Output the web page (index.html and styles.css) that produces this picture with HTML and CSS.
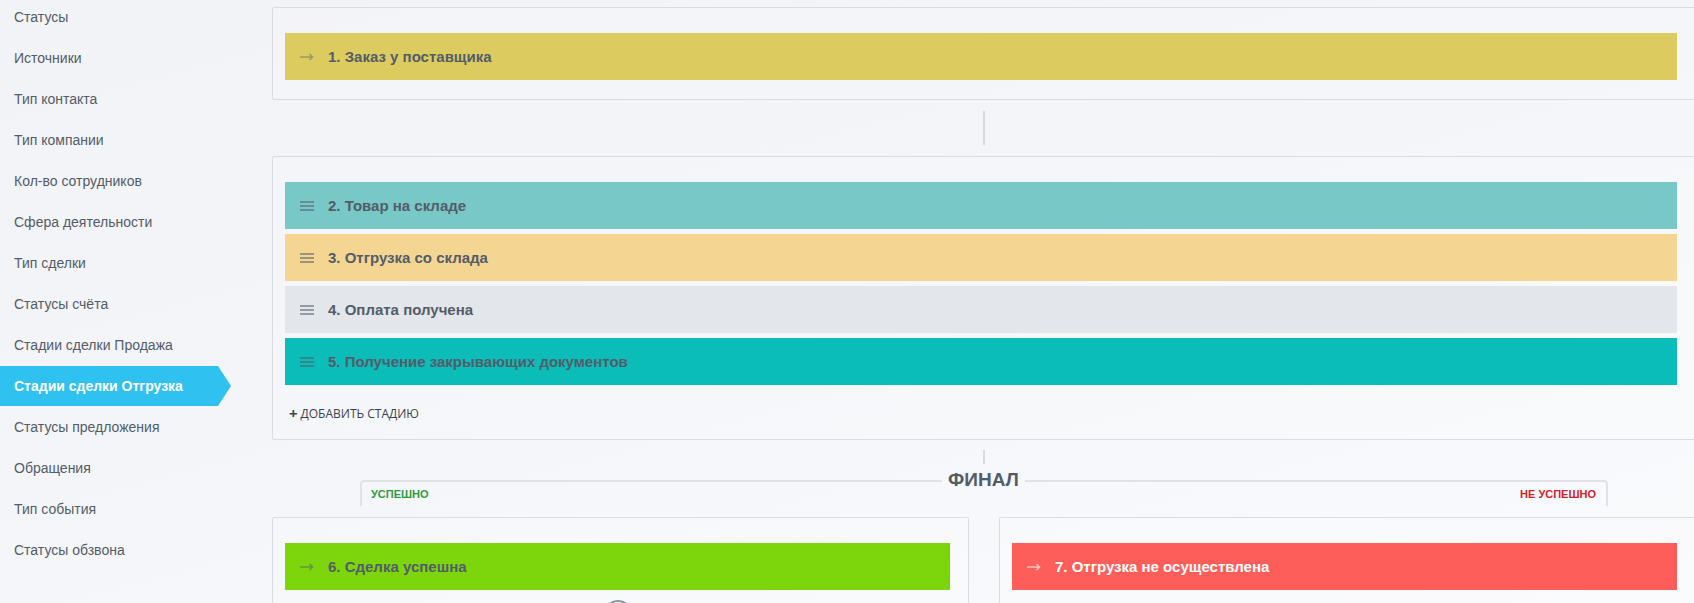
FILE: index.html
```html
<!DOCTYPE html>
<html lang="ru">
<head>
  <meta charset="UTF-8">
  <title>Стадии сделки Отгрузка</title>
  <link rel="stylesheet" href="styles.css">
</head>
<body>

  <div class="sidebar">
    <a class="nav-item">Статусы</a>
    <a class="nav-item">Источники</a>
    <a class="nav-item">Тип контакта</a>
    <a class="nav-item">Тип компании</a>
    <a class="nav-item">Кол-во сотрудников</a>
    <a class="nav-item">Сфера деятельности</a>
    <a class="nav-item">Тип сделки</a>
    <a class="nav-item">Статусы счёта</a>
    <a class="nav-item">Стадии сделки Продажа</a>
    <a class="nav-item active">Стадии сделки Отгрузка</a>
    <a class="nav-item">Статусы предложения</a>
    <a class="nav-item">Обращения</a>
    <a class="nav-item">Тип события</a>
    <a class="nav-item">Статусы обзвона</a>
  </div>

  <div class="main">
    <div class="card">
      <div class="stage stage-yellow">
        <svg class="stage-icon" width="14" height="8" viewBox="0 0 14 8"><path d="M0 4h12.5M9.5 1l3 3-3 3" fill="none" stroke="currentColor" stroke-width="1.6"/></svg>
        <span>1. Заказ у поставщика</span>
      </div>
    </div>

    <div class="connector"><div class="connector-line"></div></div>

    <div class="card">
      <div class="stage stage-teal">
        <svg class="stage-icon" width="14" height="10" viewBox="0 0 14 10"><rect y="0" width="14" height="2"/><rect y="4" width="14" height="2"/><rect y="8" width="14" height="2"/></svg>
        <span>2. Товар на складе</span>
      </div>
      <div class="stage stage-orange">
        <svg class="stage-icon" width="14" height="10" viewBox="0 0 14 10"><rect y="0" width="14" height="2"/><rect y="4" width="14" height="2"/><rect y="8" width="14" height="2"/></svg>
        <span>3. Отгрузка со склада</span>
      </div>
      <div class="stage stage-grey">
        <svg class="stage-icon" width="14" height="10" viewBox="0 0 14 10"><rect y="0" width="14" height="2"/><rect y="4" width="14" height="2"/><rect y="8" width="14" height="2"/></svg>
        <span>4. Оплата получена</span>
      </div>
      <div class="stage stage-sea">
        <svg class="stage-icon" width="14" height="10" viewBox="0 0 14 10"><rect y="0" width="14" height="2"/><rect y="4" width="14" height="2"/><rect y="8" width="14" height="2"/></svg>
        <span>5. Получение закрывающих документов</span>
      </div>
      <div class="add-stage"><span class="plus">+</span>ДОБАВИТЬ СТАДИЮ</div>
    </div>

    <div class="connector connector-short"><div class="connector-line"></div></div>

    <div class="final">
      <div class="final-side final-left"><span class="success">УСПЕШНО</span></div>
      <div class="final-title">ФИНАЛ</div>
      <div class="final-side final-right"><span class="fail">НЕ УСПЕШНО</span></div>
    </div>

    <div class="final-cards">
      <div class="card">
        <div class="stage stage-green">
          <svg class="stage-icon" width="14" height="8" viewBox="0 0 14 8"><path d="M0 4h12.5M9.5 1l3 3-3 3" fill="none" stroke="currentColor" stroke-width="1.6"/></svg>
          <span>6. Сделка успешна</span>
        </div>
        <div class="round-btn"></div>
      </div>
      <div class="card">
        <div class="stage stage-red">
          <svg class="stage-icon" width="14" height="8" viewBox="0 0 14 8"><path d="M0 4h12.5M9.5 1l3 3-3 3" fill="none" stroke="currentColor" stroke-width="1.6"/></svg>
          <span>7. Отгрузка не осуществлена</span>
        </div>
      </div>
    </div>
  </div>

</body>
</html>
```

FILE: styles.css
```css
* {
  box-sizing: border-box;
}

body {
  margin: 0;
  display: flex;
  height: 603px;
  overflow: hidden;
  font-family: "Liberation Sans", Arial, sans-serif;
  color: #535c69;
  background: linear-gradient(165deg, #f2f3f6 0%, #f3f5f9 45%, #fafbfd 100%);
}

/* left menu */
.sidebar {
  width: 240px;
  flex-shrink: 0;
  margin-top: -3px;
}

.nav-item {
  display: block;
  width: 231px;
  height: 40px;
  margin-bottom: 1px;
  padding-left: 14px;
  line-height: 40px;
  font-size: 14px;
  color: #535c69;
  white-space: nowrap;
}

.nav-item.active {
  background: #2fc1f0;
  color: #fff;
  font-weight: bold;
  clip-path: polygon(0 0, 218px 0, 100% 50%, 218px 100%, 0 100%);
}

/* stages */
.main {
  flex: 1;
  min-width: 0;
  margin-right: -2px;
  padding: 7px 0 0 32px;
}

.card {
  border: 1px solid #d9dce1;
  border-radius: 2px;
  padding: 25px 18px 19px 12px;
  background: rgba(255, 255, 255, 0.15);
}

.stage {
  display: flex;
  align-items: center;
  height: 47px;
  padding-left: 15px;
  margin-bottom: 5px;
  font-size: 15px;
  font-weight: bold;
  color: #535c69;
}

.stage:last-child {
  margin-bottom: 0;
}

.stage-icon {
  flex-shrink: 0;
  margin-right: 14px;
  color: rgba(83, 92, 105, 0.55);
  fill: currentColor;
}

.stage-yellow { background: #dccc5f; }
.stage-teal { background: #78c8c7; }
.stage-orange { background: #f4d692; }
.stage-grey { background: #e3e6ea; }
.stage-sea { background: #0bbdb8; }
.stage-green { background: #7dd60b; margin-bottom: 0; }

.stage-red {
  background: #fe5e5a;
  color: #fff;
}

.stage-red .stage-icon {
  color: rgba(255, 255, 255, 0.6);
}

.stage-yellow .stage-icon {
  color: rgba(83, 92, 105, 0.45);
}

.add-stage {
  display: flex;
  align-items: center;
  height: 16px;
  margin-top: 20px;
  margin-bottom: -1px;
  padding-left: 4px;
  font-family: "Open Sans", sans-serif;
  font-size: 12px;
  color: #3b414c;
}

.add-stage .plus {
  font-size: 15px;
  font-weight: bold;
  margin-right: 3px;
}

.connector {
  display: flex;
  justify-content: center;
  align-items: center;
  height: 56px;
}

.connector-line {
  width: 2px;
  height: 34px;
  background: #d6d9de;
}

.connector-short {
  height: 14px;
  margin-top: 10px;
}

.connector-short .connector-line {
  height: 14px;
}

/* final block */
.final {
  display: flex;
  align-items: flex-start;
  margin: 5px 88px 0;
}

.final-side {
  flex: 1;
  height: 26px;
  margin-top: 11px;
  border-top: 2px solid #dfe2e6;
  font-size: 11px;
  font-weight: bold;
  line-height: 24px;
}

.final-left {
  border-left: 2px solid #dfe2e6;
  border-top-left-radius: 4px;
  padding-left: 9px;
}

.final-right {
  border-right: 2px solid #dfe2e6;
  border-top-right-radius: 4px;
  padding-right: 10px;
  text-align: right;
}

.success { color: #2f9a3f; }
.fail { color: #d0222a; }

.final-title {
  padding: 0 6px;
  font-size: 19px;
  font-weight: bold;
  line-height: 22px;
  color: #535c69;
}

.final-cards {
  display: grid;
  grid-template-columns: 1fr 1fr;
  gap: 30px;
  margin-top: 11px;
}

.round-btn {
  width: 30px;
  height: 30px;
  margin: 10px auto 0;
  border: 2px solid #8e939b;
  border-radius: 50%;
}
```
